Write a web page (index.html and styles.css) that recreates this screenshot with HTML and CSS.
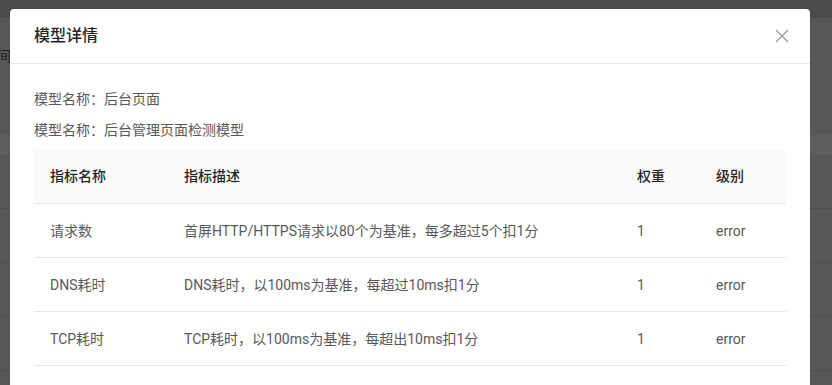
FILE: index.html
```html
<!DOCTYPE html>
<html lang="zh-CN">
<head>
  <meta charset="UTF-8">
  <title>模型详情</title>
  <link rel="stylesheet" href="styles.css">
</head>
<body>
  <!-- === PAGE BEHIND THE MASK === -->
  <div class="page">
    <div class="page-top"></div>
    <div class="page-filter">时间：</div>
    <div class="page-thead"></div>
    <div class="page-row"></div>
    <div class="page-row"></div>
    <div class="page-row"></div>
    <div class="page-row"></div>
  </div>

  <!-- === MODAL === -->
  <div class="modal">
    <div class="modal-header">
      <span class="modal-title">模型详情</span>
      <button class="modal-close" title="关闭">
        <svg width="14" height="14" viewBox="0 0 14 14">
          <path d="M1 1 L13 13 M13 1 L1 13" stroke="#999" stroke-width="1.3" fill="none"/>
        </svg>
      </button>
    </div>
    <div class="modal-body">
      <p class="info">模型名称：后台页面</p>
      <p class="info">模型名称：后台管理页面检测模型</p>

      <table class="rules">
        <colgroup>
          <col class="c-name">
          <col class="c-desc">
          <col class="c-weight">
          <col class="c-level">
        </colgroup>
        <thead>
          <tr>
            <th>指标名称</th>
            <th>指标描述</th>
            <th>权重</th>
            <th>级别</th>
          </tr>
        </thead>
        <tbody>
          <tr>
            <td>请求数</td>
            <td>首屏HTTP/HTTPS请求以80个为基准，每多超过5个扣1分</td>
            <td>1</td>
            <td>error</td>
          </tr>
          <tr>
            <td>DNS耗时</td>
            <td>DNS耗时，以100ms为基准，每超过10ms扣1分</td>
            <td>1</td>
            <td>error</td>
          </tr>
          <tr>
            <td>TCP耗时</td>
            <td>TCP耗时，以100ms为基准，每超出10ms扣1分</td>
            <td>1</td>
            <td>error</td>
          </tr>
        </tbody>
      </table>
    </div>
  </div>
</body>
</html>
```

FILE: styles.css
```css
body {
  margin: 0;
  background: #575757;
  font-family: Roboto, "Noto Sans CJK SC", sans-serif;
  font-size: 14px;
  overflow: hidden;
  height: 385px;
}

/* === background page (already dimmed) === */
.page {
  display: flex;
  flex-direction: column;
}

.page-top {
  height: 18px;
  background: #4b4b4b;
}

.page-filter {
  height: 117px;
  padding-top: 27px;
  box-sizing: border-box;
  margin-left: -17px;
  color: #1e1e1e;
  line-height: 22px;
}

.page-thead {
  height: 20px;
  background: #5d5d5d;
}

.page-row {
  height: 54px;
  border-bottom: 1px solid #4e4e4e;
  box-sizing: border-box;
}

.page-row:first-of-type {
  height: 71px;
}

/* === modal === */
.modal {
  position: absolute;
  top: 9px;
  left: 10px;
  width: 800px;
  height: 420px;
  background: #fff;
  border-radius: 4px;
}

.modal-header {
  display: flex;
  align-items: center;
  justify-content: space-between;
  height: 54px;
  padding: 0 21px 0 24px;
  border-bottom: 1px solid #e8e8e8;
}

.modal-title {
  font-size: 16px;
  font-weight: 500;
  color: #262626;
  line-height: 22px;
}

.modal-close {
  border: 0;
  background: none;
  padding: 0;
  width: 14px;
  height: 14px;
  cursor: pointer;
}

.modal-body {
  padding: 24px 24px 0;
}

.info {
  margin: 0 0 9px;
  line-height: 22px;
  color: #595959;
}

/* === rules table === */
.rules {
  width: 100%;
  border-collapse: collapse;
  table-layout: fixed;
}

.c-name { width: 134px; }
.c-weight { width: 79px; }
.c-level { width: 86px; }

.rules th,
.rules td {
  text-align: left;
  padding: 16px;
  line-height: 21px;
  border-bottom: 1px solid #e8e8e8;
  white-space: nowrap;
}

.rules th {
  background: #fafafa;
  color: #262626;
  font-weight: 500;
}

.rules td {
  color: #595959;
  padding-top: 17px;
  padding-bottom: 15px;
}
```
